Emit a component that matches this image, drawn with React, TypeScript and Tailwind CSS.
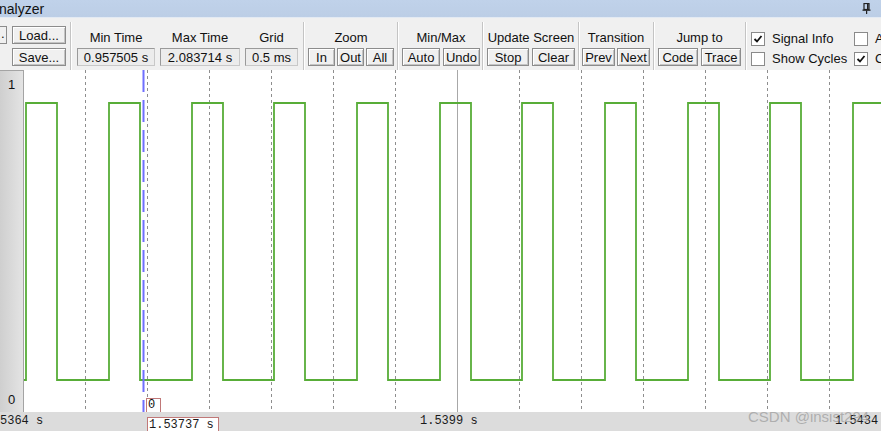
import React from "react";

const font = { fontFamily: '"Liberation Sans", Arial, sans-serif' };
const mono = { fontFamily: '"Liberation Mono", "Courier New", monospace' };

const Btn = ({ children, className }: { children: React.ReactNode; className: string }) => (
  <div
    className={`h-[18px] border border-[#8c8c8c] bg-[#f0f0f0] shadow-[inset_1px_1px_0_#ffffff,inset_-1px_-1px_0_#c4c4c4] flex items-center justify-center text-[13px] leading-none text-[#111] ${className}`}
  >
    {children}
  </div>
);

const Field = ({ children, className }: { children: React.ReactNode; className: string }) => (
  <div
    className={`h-[18px] border border-[#c8c8c8] border-t-[#9a9a9a] border-l-[#9a9a9a] bg-[#ececec] flex items-center justify-center text-[13px] leading-none text-[#111] ${className}`}
  >
    {children}
  </div>
);

const Sep = () => <div className="w-[2px] mt-[4px] border-l border-[#c4c4c4] bg-white shrink-0" />;

const Group = ({ label, children, className }: { label: string; children: React.ReactNode; className: string }) => (
  <div className={`flex flex-col pt-[12px] shrink-0 ${className}`}>
    <div className="h-[16px] leading-[16px] text-[13px] text-center text-[#111] whitespace-nowrap">{label}</div>
    <div className="mt-[2px] flex">{children}</div>
  </div>
);

const Check = ({ checked }: { checked?: boolean }) => (
  <div className="w-[14px] h-[14px] border border-[#8a8a8a] bg-white flex items-center justify-center shrink-0">
    {checked && (
      <svg width="10" height="10" viewBox="0 0 10 10">
        <polyline points="1.5,5 4,7.5 8.5,2" fill="none" stroke="#111" strokeWidth="1.8" />
      </svg>
    )}
  </div>
);

const highs = [26, 109, 192, 274, 357, 440, 522, 605, 688, 770, 853];
const width = 31;

function wavePath() {
  const hi = 33;
  const lo = 310;
  let d = `M24,${lo} `;
  highs.forEach((x) => {
    const end = Math.min(x + width, 882);
    d += `L${x},${lo} L${x},${hi} L${end},${hi} `;
    if (end < 882) d += `L${end},${lo} `;
  });
  return d;
}

const grid = Array.from({ length: 13 }, (_, k) => 85 + 62 * k);

export default function App() {
  return (
    <div className="w-[881px] h-[431px] overflow-hidden bg-[#f0f0f0] flex flex-col" style={font}>
      {/* title */}
      <div className="h-[18px] bg-gradient-to-b from-[#c0d2ea] to-[#bccee6] border-b border-[#e3eaf3] flex items-center justify-between shrink-0">
        <span className="text-[14px] leading-none text-[#111] -ml-[1px] mt-[1px]">nalyzer</span>
        <svg width="9" height="11" viewBox="0 0 9 11" className="mr-[10px]">
          <rect x="2" y="0.5" width="5" height="6" fill="none" stroke="#222" strokeWidth="1.2" />
          <rect x="5" y="0.5" width="1.5" height="6" fill="#222" />
          <rect x="0.5" y="6.5" width="8" height="1.3" fill="#222" />
          <rect x="4" y="7.5" width="1.2" height="3.5" fill="#222" />
        </svg>
      </div>

      {/* toolbar */}
      <div className="h-[52px] flex shrink-0">
        <div className="w-[70px] flex flex-col pt-[8px] gap-[4px] shrink-0">
          <div className="flex">
            <div className="w-[7px] h-[18px] border border-l-0 border-[#8c8c8c] text-[13px] leading-[14px] pl-[1px] text-[#111]">.</div>
            <Btn className="ml-[5px] w-[54px]">Load...</Btn>
          </div>
          <Btn className="ml-[12px] w-[54px]">Save...</Btn>
        </div>
        <Sep />
        <div className="w-[231px] flex pl-[5px] gap-[5px] shrink-0">
          <Group label="Min Time" className="w-[78px]">
            <Field className="w-[78px]">0.957505 s</Field>
          </Group>
          <Group label="Max Time" className="w-[80px]">
            <Field className="w-[80px]">2.083714 s</Field>
          </Group>
          <Group label="Grid" className="w-[53px]">
            <Field className="w-[53px]">0.5 ms</Field>
          </Group>
        </div>
        <Sep />
        <Group label="Zoom" className="w-[92px] pl-[3px] pr-[3px]">
          <Btn className="w-[27px]">In</Btn>
          <Btn className="w-[27px] ml-[2px]">Out</Btn>
          <Btn className="w-[28px] ml-[2px]">All</Btn>
        </Group>
        <Sep />
        <Group label="Min/Max" className="w-[83px] pl-[3px] pr-[2px]">
          <Btn className="w-[38px]">Auto</Btn>
          <Btn className="w-[37px] ml-[3px]">Undo</Btn>
        </Group>
        <Sep />
        <Group label="Update Screen" className="w-[94px] pl-[3px] pr-[3px]">
          <Btn className="w-[42px]">Stop</Btn>
          <Btn className="w-[43px] ml-[3px]">Clear</Btn>
        </Group>
        <Sep />
        <Group label="Transition" className="w-[73px] pl-[2px] pr-[3px]">
          <Btn className="w-[33px]">Prev</Btn>
          <Btn className="w-[33px] ml-[2px]">Next</Btn>
        </Group>
        <Sep />
        <Group label="Jump to" className="w-[90px] pl-[3px] pr-[4px]">
          <Btn className="w-[40px]">Code</Btn>
          <Btn className="w-[40px] ml-[3px]">Trace</Btn>
        </Group>
        <Sep />
        <div className="flex pl-[4px] pt-[14px] shrink-0">
          <div className="w-[103px] flex flex-col gap-[6px]">
            <div className="flex items-center h-[14px]">
              <Check checked />
              <span className="ml-[7px] text-[13px] text-[#111] whitespace-nowrap">Signal Info</span>
            </div>
            <div className="flex items-center h-[14px]">
              <Check />
              <span className="ml-[7px] text-[13px] text-[#111] whitespace-nowrap">Show Cycles</span>
            </div>
          </div>
          <div className="flex flex-col gap-[6px]">
            <div className="flex items-center h-[14px]">
              <Check />
              <span className="ml-[7px] text-[13px] text-[#111]">A</span>
            </div>
            <div className="flex items-center h-[14px]">
              <Check checked />
              <span className="ml-[7px] text-[13px] text-[#111]">C</span>
            </div>
          </div>
        </div>
      </div>

      {/* plot */}
      <div className="h-[342px] flex shrink-0">
        <div className="w-[24px] bg-gradient-to-r from-[#cfcfcf] to-[#e4e4e4] border-t border-r border-[#a4a4a4] flex flex-col justify-between items-center pt-[4px] pb-[3px] text-[13px] text-[#111]">
          <span>1</span>
          <span>0</span>
        </div>
        <div className="relative flex-1 bg-white">
          <svg className="absolute inset-0" width="857" height="342" viewBox="24 0 857 342">
            {grid.map((x, k) =>
              k === 6 ? (
                <line key={x} x1={x + 0.5} y1="0" x2={x + 0.5} y2="342" stroke="#a8a8a8" strokeWidth="1" />
              ) : (
                <line key={x} x1={x + 0.5} y1="0" x2={x + 0.5} y2="342" stroke="#8e8e8e" strokeWidth="1" strokeDasharray="3 3" />
              )
            )}
            <path d={wavePath()} fill="none" stroke="#58ad38" strokeWidth="1.8" />
            <line x1="143.5" y1="0" x2="143.5" y2="342" stroke="#6f6fff" strokeWidth="2" strokeDasharray="22 8" />
          </svg>
          <div className="absolute left-[122px] top-[328px] w-[15px] h-[15px] border border-[#c07878] bg-white text-[12px] leading-[13px] pl-[1px] text-[#111]" style={mono}>
            0
          </div>
        </div>
      </div>

      {/* axis */}
      <div className="relative h-[19px] bg-[#dcdcdc] overflow-hidden text-[12px] text-[#1a1a1a] shrink-0" style={mono}>
        <span className="absolute left-0 top-[2px] leading-[15px] whitespace-nowrap">5364 s</span>
        <span className="absolute left-[420px] top-[2px] leading-[15px] whitespace-nowrap">1.5399 s</span>
        <span className="absolute left-[835px] top-[2px] leading-[15px] whitespace-nowrap">1.5434 s</span>
        <div className="absolute left-[147px] top-[5px] w-[72px] h-[16px] border border-[#c07878] bg-white leading-[14px] pl-[1px] whitespace-nowrap">
          1.53737 s
        </div>
        <span className="absolute left-[748px] -top-[4px] text-[15px] leading-[18px] text-[#9a9a9a]/70 whitespace-nowrap" style={font}>
          CSDN @insist294
        </span>
      </div>
    </div>
  );
}
